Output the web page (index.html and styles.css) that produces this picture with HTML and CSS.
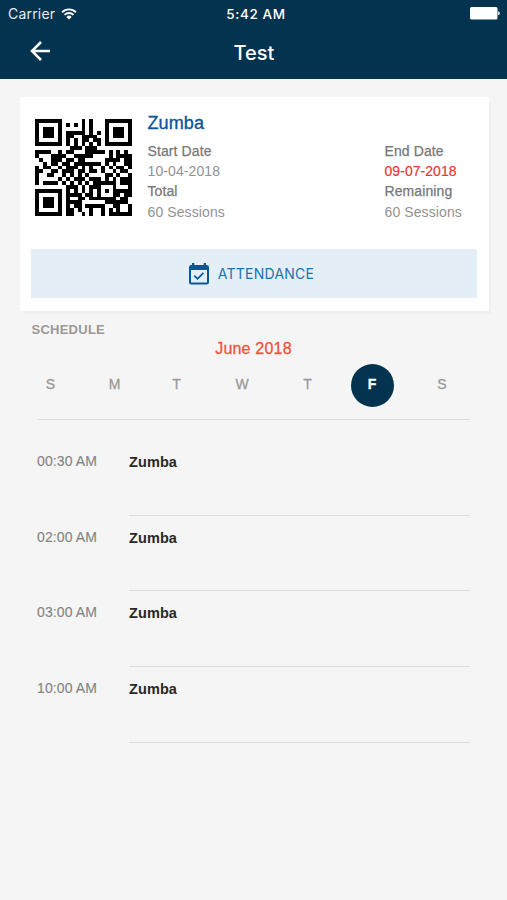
FILE: index.html
```html
<!DOCTYPE html>
<html lang="en">
<head>
<meta charset="utf-8">
<title>Test</title>
<link rel="stylesheet" href="styles.css">
</head>
<body>
<header class="top">
  <div class="status">
    <div class="carrier"><span>Carrier</span>
      <svg width="16" height="12" viewBox="0 0 16 12" fill="none" stroke="#fff" stroke-width="1.9"><path d="M1 4.2a10 10 0 0 1 14 0M3.500 6.900a6.400 6.400 0 0 1 9 0"/><path d="M8 11.400 5.400 8.900a3.700 3.700 0 0 1 5.200 0z" fill="#fff" stroke="none"/></svg>
    </div>
    <div class="clock">5:42 AM</div>
    <div class="battery"><svg width="30" height="13" viewBox="0 0 30 13" fill="#fff"><rect width="27.500" height="12.500" rx="1.600"/><path d="M28.200 4.200c2.200.8 2.200 3.300 0 4.100z"/></svg></div>
  </div>
  <div class="nav">
    <svg class="back" width="20" height="20" viewBox="0 0 20 20" fill="none" stroke="#fff" stroke-width="2.500"><path d="M20 10H2M11 1 2 10l9 9"/></svg>
    <h1>Test</h1>
    <span></span>
  </div>
</header>
<main>
  <section class="card">
    <div class="info">
      <svg id="qr" class="qr" viewBox="0 0 25 25" shape-rendering="crispEdges"></svg>
      <div class="details">
        <h2>Zumba</h2>
        <div class="cols">
          <dl><dt>Start Date</dt><dd>10-04-2018</dd><dt>Total</dt><dd>60 Sessions</dd></dl>
          <dl><dt>End Date</dt><dd class="due">09-07-2018</dd><dt>Remaining</dt><dd>60 Sessions</dd></dl>
        </div>
      </div>
    </div>
    <div class="attendance">
      <svg width="20" height="22" viewBox="0 0 20 22"><path fill="#07569a" fill-rule="evenodd" d="M3 0h2.300v2h9.400V0H17v2h.7Q20 2 20 4.200v15Q20 21.500 17.700 21.500H2.300Q0 21.500 0 19.200v-15Q0 2 2.300 2H3zM2 7v12.500h16V7z"/><path d="m5.300 12.700 3.200 3.200 6-6" fill="none" stroke="#07569a" stroke-width="1.700"/></svg>
      <span>ATTENDANCE</span>
    </div>
  </section>
  <h3 class="label">SCHEDULE</h3>
  <div class="month">June 2018</div>
  <div class="week"><span>S</span><span>M</span><span>T</span><span>W</span><span>T</span><span class="on">F</span><span>S</span></div>
  <div class="list">
    <div class="row"><time>00:30 AM</time><b>Zumba</b></div>
    <div class="row"><time>02:00 AM</time><b>Zumba</b></div>
    <div class="row"><time>03:00 AM</time><b>Zumba</b></div>
    <div class="row"><time>10:00 AM</time><b>Zumba</b></div>
  </div>
</main>
<script src="qr.js"></script>
</body>
</html>
```
FILE: styles.css
```css
* { box-sizing: border-box; margin: 0; padding: 0; }
body { background: #f5f5f5; font-family: "Liberation Sans", sans-serif; color: #858585; }
svg { display: block; flex: none; }
.top { height: 79px; background: #03334f; color: #fff; font-family: Inter, sans-serif; }
.status { display: grid; grid-template-columns: 1fr auto 1fr; align-items: center; height: 27px; padding: 0 7px 0 8px; font-size: 14px; }
.carrier { display: flex; align-items: center; gap: 6px; color: #e5ecf0; letter-spacing: .2px; }
.clock { font-size: 13.500px; font-weight: 500; letter-spacing: .65px; padding-left: 4px; }
.battery { display: flex; justify-content: flex-end; }
.nav { display: grid; grid-template-columns: 20px 1fr 20px; align-items: center; height: 50px; padding: 0 29px 0 30px; }
.back { margin-top: -2px; }
.nav h1 { text-align: center; font-size: 20px; font-weight: 500; line-height: 24px; padding-top: 1px; }
main { padding: 18px 0 0; }
.card { width: 469px; height: 214px; margin-left: 20px; padding: 13px 12px 13px 15px; background: #fff; box-shadow: 3px 4px 1px -1px #efefef; }
.info { display: flex; height: 139px; }
.qr { width: 97px; height: 97px; margin-top: 9px; fill: #000; }
.details { margin-left: 15.500px; flex: 1; }
.details h2 { color: #07569a; font-size: 18px; font-weight: 400; line-height: 26px; letter-spacing: .1px; -webkit-text-stroke: .35px; }
.cols { display: grid; grid-template-columns: 237px 1fr; margin-top: 5px; }
dl { display: grid; grid-template-rows: 20px 20px 21px 20px; font-size: 14px; line-height: 20px; white-space: nowrap; }
dt { color: #777; letter-spacing: .1px; -webkit-text-stroke: .25px; }
dd { color: #929292; letter-spacing: .1px; }
.due { color: #e7392f; letter-spacing: .05px; -webkit-text-stroke: .2px; }
.attendance { display: flex; align-items: center; justify-content: center; gap: 9px; height: 49px; margin-left: -4px; padding-right: 5px; background: #e4eef7; color: #1b73ad; font: 14px Inter, sans-serif; letter-spacing: .25px; }
.label { margin: 10px 0 0 31.500px; font-size: 13px; line-height: 18px; letter-spacing: .25px; color: #999; }
.month { text-align: center; font-size: 16px; line-height: 20px; letter-spacing: .2px; color: #f4513d; -webkit-text-stroke: .3px; }
.week { display: grid; grid-template-columns: 64px 62px 65.500px 65.500px 64.500px 70px 43px; height: 61px; margin: 0 37px; padding-top: 5px; border-bottom: 1px solid #dedede; font-size: 14px; color: #999; -webkit-text-stroke: .3px; }
.week span { display: flex; width: 43px; height: 43px; margin-left: -8px; align-items: center; justify-content: center; padding-bottom: 4px; }
.week .on { background: #03334f; border-radius: 50%; color: #fff; font-weight: 700; }
.list { margin: 20px 37px 0; }
.row { display: grid; grid-template-columns: 92px 1fr; height: 75.700px; font-size: 14px; line-height: 18px; }
.row time { padding-top: 12px; letter-spacing: .1px; -webkit-text-stroke: .15px; }
.row b { padding-top: 13px; font-size: 14.500px; letter-spacing: .1px; color: #282828; border-bottom: 1px solid #dcdcdc; }
```
FILE: qr.js
```js
const rows = [
  "1111111000001010001111111",
  "1000001010101010001000001",
  "1011101000001010001011101",
  "1011101011111010101011101",
  "1011101011001111001011101",
  "1000001010101101101000001",
  "1111111010101010101111111",
  "0000000001110111000000000",
  "1111001011000111110101010",
  "1000111100111110000101111",
  "0100111011011000001111011",
  "0010110110111111101010011",
  "1011001011101010010101101",
  "1100110111011011010010110",
  "1001100101010100001101001",
  "1000001010111011101010111",
  "1011110101010101111110111",
  "0000000011101011100010001",
  "1111111010101010101011111",
  "1000001011110110100011011",
  "1011101010011011111110110",
  "1011101011110000001111110",
  "1011101010110111110011001",
  "1000001011010010010101001",
  "1111111011001010010111111"
];
const svg = document.getElementById("qr");
rows.forEach((row, y) => [...row].forEach((cell, x) => {
  if (cell !== "1") return;
  const r = document.createElementNS("http://www.w3.org/2000/svg", "rect");
  r.setAttribute("x", x);
  r.setAttribute("y", y);
  r.setAttribute("width", 1);
  r.setAttribute("height", 1);
  svg.append(r);
}));
```
